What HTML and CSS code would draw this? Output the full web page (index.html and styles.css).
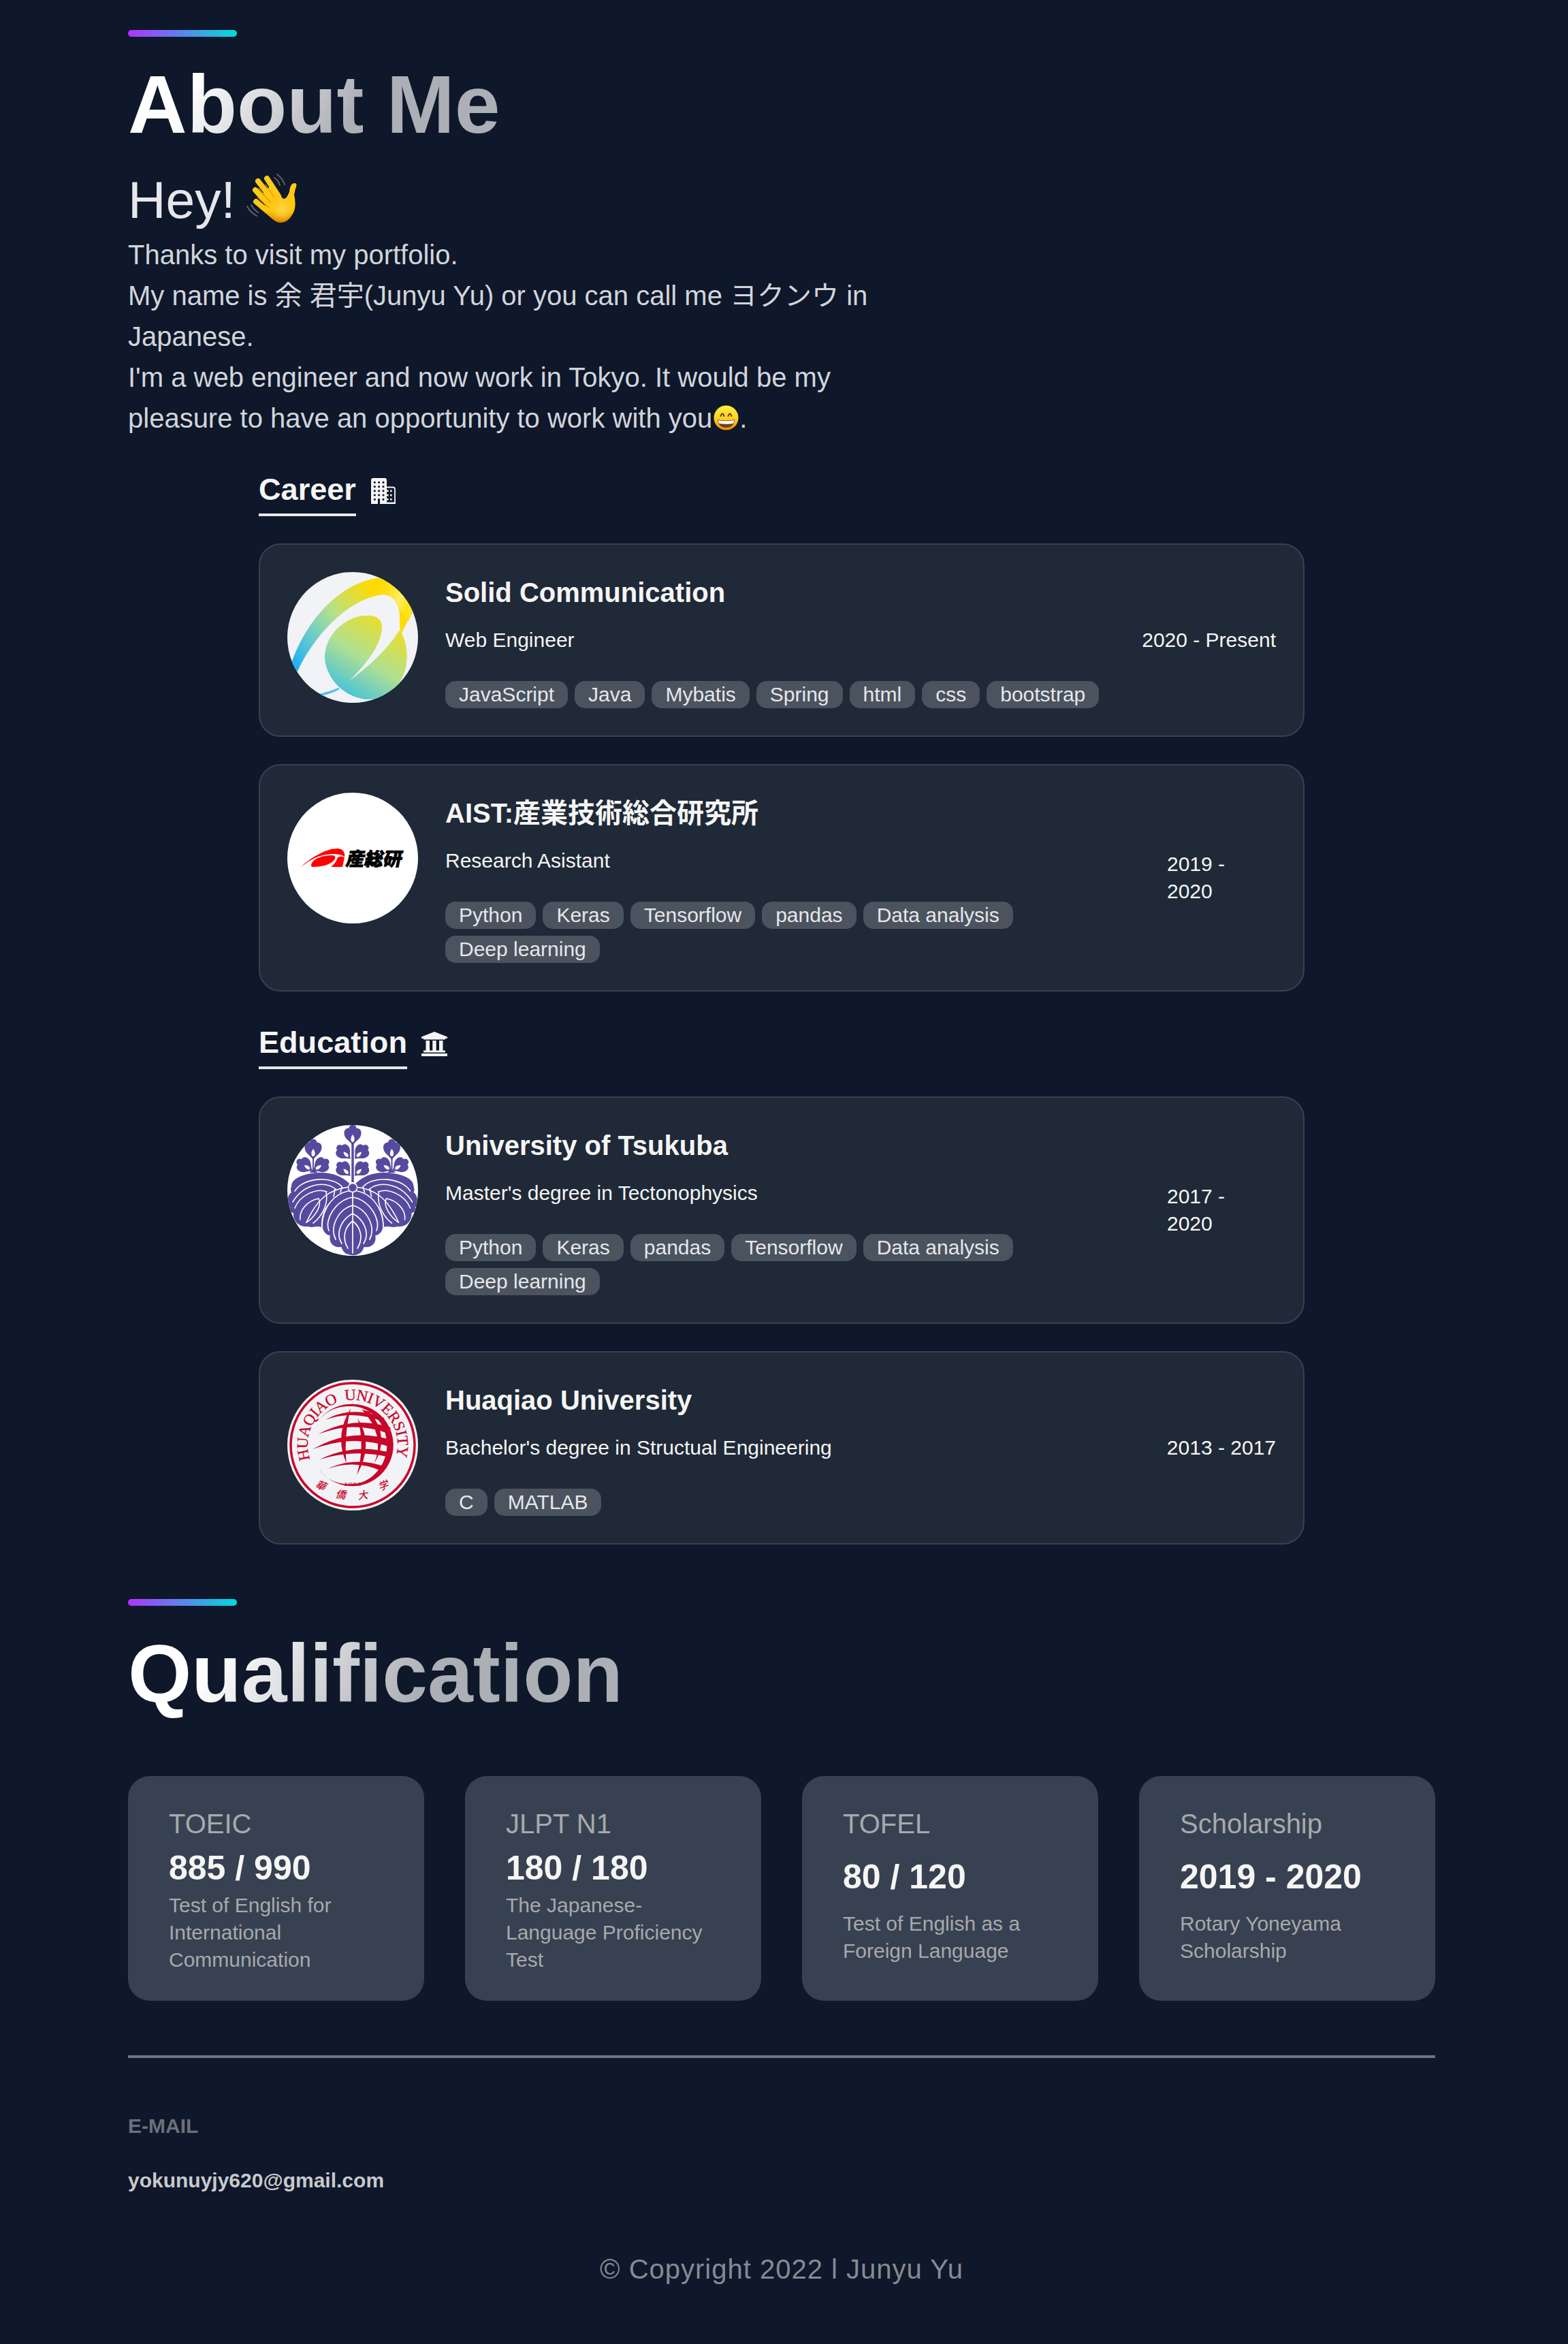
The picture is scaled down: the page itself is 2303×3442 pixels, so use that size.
FILE: index.html
```html
<!DOCTYPE html>
<html lang="en">
<head>
<meta charset="utf-8">
<title>Junyu Yu</title>
<link rel="stylesheet" href="styles.css">
</head>
<body>
<main class="page">
  <section class="about">
    <div class="accent"></div>
    <h1 class="title">About Me</h1>
    <div class="intro">
      <p class="hey">Hey! <svg class="wave" viewBox="0 0 74 73" role="img" aria-label="Waving hand">
        <defs>
          <linearGradient id="skin" x1="0" y1="0" x2="0" y2="73" gradientUnits="userSpaceOnUse"><stop offset="0" stop-color="#ffcb1f"/><stop offset=".75" stop-color="#ffc60e"/><stop offset="1" stop-color="#dd8200"/></linearGradient>
          <radialGradient id="palm" cx=".5" cy=".55" r=".5"><stop offset="0" stop-color="#ffd445"/><stop offset="1" stop-color="#ffd445" stop-opacity="0"/></radialGradient>
        </defs>
        <path d="M36 18 54 38Q58 38 60 34L63 28Q64 14 72 15 75 17 72 23L70 32Q74 50 68 60 61 73 50 73 43 73 37 66L18 44 33 50 24 30Z" fill="url(#skin)"/>
        <g fill="none" stroke="url(#skin)" stroke-width="8" stroke-linecap="round">
          <path d="M30 8 47 34"/><path d="M17 12 42 44"/><path d="M13 25 40 55"/><path d="M14 42 40 64"/>
        </g>
        <g fill="none" stroke="#e39a00" stroke-width="1.3" stroke-linecap="round">
          <path d="M28 17 41 36"/><path d="M18 23 35 43"/><path d="M17 36 33 51"/>
        </g>
        <ellipse cx="52" cy="52" rx="16" ry="18" fill="url(#palm)"/>
        <g fill="none" stroke="#626264" stroke-width="2" stroke-linecap="round"><path d="M45 2Q53 8 56 17"/><path d="M41 7Q47 11 49 18"/><path d="M1 49Q6 58 15 63"/><path d="M7 47Q11 54 17 58"/></g>
      </svg></p>
      <p class="text">Thanks to visit my portfolio.<br>My name is 余 君宇(Junyu Yu) or you can call me ヨクンウ in Japanese.<br>I'm a web engineer and now work in Tokyo. It would be my pleasure to have an opportunity to work with you<svg class="smile" viewBox="0 0 37 37" role="img" aria-label="Grinning face">
        <defs><linearGradient id="face" x2="0" y2="1"><stop offset="0" stop-color="#fff23c"/><stop offset=".55" stop-color="#ffcf22"/><stop offset="1" stop-color="#f08a10"/></linearGradient></defs>
        <circle cx="18.500" cy="18.500" r="18" fill="url(#face)"/>
        <path d="M10.500 16q2.500-7 5 0M21.500 16q2.500-7 5 0" fill="none" stroke="#6b3b06" stroke-width="2" stroke-linecap="round"/>
        <path d="M6 21q12.500 3 25 0Q30 33 18.500 33 7 33 6 21Z" fill="#74400c"/><path d="M7 22q11.500 2.500 23 0 0 5-2 5-9.500 1.500-19 0-2 0-2-5Z" fill="#fff"/>
      </svg>.</p>
    </div>

    <div class="history">
      <div class="heading"><h2 class="heading-text">Career</h2><svg class="icon-building" viewBox="0 0 36 38" aria-hidden="true">
        <path fill="#f5f5f4" d="M3 0H20Q23 0 23 3V38H13V31Q13 30 12 30H11Q10 30 10 31V38H0V3Q0 0 3 0Z"/>
        <path fill="none" stroke="#f5f5f4" stroke-width="1.8" d="M23 13.500H32Q35 13.500 35 16.500V37"/>
        <path fill="#f5f5f4" d="M22 35.500H36V38H22Z"/>
        <path fill="none" stroke="#0f172a" stroke-width="3.200" stroke-linecap="round" d="M5.300 6.300h.01M11.600 6.300h.01M18 6.300h.01M5.300 12.600h.01M11.600 12.600h.01M18 12.600h.01M5.300 18.800h.01M11.600 18.800h.01M18 18.800h.01M5.300 25h.01M11.600 25h.01M18 25h.01M5.300 31.300h.01M18 31.300h.01"/>
        <path fill="#f5f5f4" d="M23 17.500h2.600v2.700H23zM28 17.500h2.600v2.700H28zM23 23.700h2.600v2.700H23zM28 23.700h2.600v2.700H28zM23 29.900h2.600v2.700H23zM28 29.900h2.600v2.700H28z"/>
      </svg></div>

      <article class="card">
        <svg class="avatar" viewBox="0 0 192 192" role="img" aria-label="Solid Communication logo">
          <defs>
            <linearGradient id="ring" gradientUnits="userSpaceOnUse" x1="8" y1="135" x2="135" y2="25"><stop offset="0" stop-color="#1eaff2"/><stop offset=".25" stop-color="#62c9cf"/><stop offset=".55" stop-color="#b2e08e"/><stop offset=".95" stop-color="#fddc06"/></linearGradient>
            <linearGradient id="glow" gradientUnits="userSpaceOnUse" x1="135" y1="20" x2="180" y2="40"><stop offset="0" stop-color="#fddc06" stop-opacity="0"/><stop offset=".7" stop-color="#fff066"/><stop offset="1" stop-color="#ffe21c"/></linearGradient>
            <linearGradient id="ball" gradientUnits="userSpaceOnUse" x1="75" y1="180" x2="145" y2="70"><stop offset="0" stop-color="#3dbfe2"/><stop offset=".5" stop-color="#b0e091"/><stop offset="1" stop-color="#ecde25"/></linearGradient>
          </defs>
          <rect width="192" height="192" fill="#f1f3f6"/>
          <path d="M5 137C25 75 75 15 137 8L170 2 192 40 167 92C165 84 165 72 165 62 163 38 149 31 134 34 84 44 37 97 14 148Z" fill="url(#ring)"/>
          <path d="M132 8 170 2 192 40 178 72 165 55Q160 32 137 33Z" fill="url(#glow)"/>
          <path d="M165 85C186 115 179 187 116 187 78 183 55 150 55 124 57 86 91 64 116 64 132 63 140 70 139 83 137 110 112 139 92 159 127 133 150 109 165 85Z" fill="url(#ball)"/>
          <path d="M46 179Q61 176 75 170L77 172Q64 179 50 182Z" fill="#55bdf2"/>
        </svg>
        <div class="body"><h3 class="name">Solid Communication</h3><p class="role">Web Engineer</p>
          <div class="tags"><span class="tag">JavaScript</span><span class="tag">Java</span><span class="tag">Mybatis</span><span class="tag">Spring</span><span class="tag">html</span><span class="tag">css</span><span class="tag">bootstrap</span></div></div>
        <p class="date">2020 - Present</p>
      </article>

      <article class="card">
        <svg class="avatar" viewBox="0 0 192 192" role="img" aria-label="AIST logo">
          <rect width="192" height="192" fill="#fff"/>
          <path d="M19 110C36 94 58 82 73 82 82 82 85 88 84 94 80 91 74 90 66 90 45 91 33 99 19 110Z" fill="#f00"/>
          <path d="M35 107C35 99 48 92 66 92 70 92 71 94 70 97 66 105 52 109 38 109Q35 109 35 107Z" fill="#f00"/>
          <path d="M84 95 81 109H64Q71 104 74 95 79 92 84 95Z" fill="#f00"/>
          <text class="aist" transform="translate(85 107) skewX(-12)" textLength="82" lengthAdjust="spacingAndGlyphs">産総研</text>
        </svg>
        <div class="body"><h3 class="name">AIST:産業技術総合研究所</h3><p class="role">Research Asistant</p>
          <div class="tags"><span class="tag">Python</span><span class="tag">Keras</span><span class="tag">Tensorflow</span><span class="tag">pandas</span><span class="tag">Data analysis</span><span class="tag">Deep learning</span></div></div>
        <p class="date">2019 -<br>2020</p>
      </article>

      <div class="heading"><h2 class="heading-text">Education</h2><svg class="icon-bank" viewBox="0 0 38 36" aria-hidden="true"><path fill="#f5f5f4" d="M19 0 38 7.500V10H35V11.500H3V10H0V7.500ZM6.500 13H12V27.500H6.500ZM16.300 13H21.700V27.500H16.300ZM26 13H31.500V27.500H26ZM3 27.500H35V30.500H3ZM0 32H38V36H0Z"/></svg></div>

      <article class="card">
        <svg class="avatar" viewBox="0 0 192 192" role="img" aria-label="University of Tsukuba emblem">
          <defs>
            <g id="floret"><g fill="#564a9f"><circle cx="0" cy="-5" r="5.500"/><circle cx="-6" cy="1" r="6.500"/><circle cx="6" cy="1" r="6.500"/><path d="M-12.500 2C-12 12-4 12 0 21 4 12 12 12 12.500 2Z"/></g><path fill="#fff" d="M0 4C4 9 3 15 0 15-3 15-4 9 0 4Z"/></g>
            <g id="half">
              <path fill="#564a9f" d="M92 87C78 72 60 70 50 70 28 70 6 77 6 90Q4 96 6 99C-1 103-1 118 4 121 2 126 6 129 9 129 8 141 17 151 31 149 37 152 42 147 50 150 49 120 65 106 91 96Z"/>
              <g fill="none" stroke="#fff" stroke-width="1.600" stroke-linecap="round">
                <path d="M91 91C62 94 44 108 28 143"/><path d="M81 92C70 75 25 75 11 97"/><path d="M71 94C56 82 25 85 8 113"/><path d="M58 98C43 92 18 103 11 122"/><path d="M46 108C30 111 17 125 19 139"/><path d="M46 108C52 120 37 138 28 143"/><path d="M57 99C61 118 48 137 38 144"/><path d="M70 94 68 105M80 92 78 99"/>
              </g>
              <path d="M38 42V66L35 69H42L39 66" fill="#564a9f" stroke="#564a9f" stroke-width="2"/>
              <use href="#floret" transform="translate(38 31)"/><use href="#floret" transform="translate(22 57) rotate(-55) scale(.9)"/><use href="#floret" transform="translate(53 57) rotate(55) scale(.9)"/>
              <use href="#floret" transform="translate(80 37) rotate(-45) scale(.88)"/><use href="#floret" transform="translate(80 62) rotate(-45) scale(.88)"/>
            </g>
          </defs>
          <rect width="192" height="192" fill="#fff"/>
          <use href="#half"/><use href="#half" transform="translate(191.500 0) scale(-1 1)"/>
          <path d="M96 25V84" stroke="#fff" stroke-width="6"/><path d="M96 25V84" stroke="#564a9f" stroke-width="3.500"/><use href="#floret" transform="translate(96 10)"/>
          <path fill="#564a9f" stroke="#fff" stroke-width="1.500" d="M96 96C70 98 51 120 51 151Q53 161 62 163C60 174 68 181 79 180 81 188 88 192 96 192 104 192 111 188 113 180 124 181 132 174 130 163Q139 161 141 151C141 120 122 98 96 96Z"/>
          <g fill="none" stroke="#fff" stroke-width="1.700" stroke-linecap="round"><path d="M96 97V188"/><path d="M61 155C54 138 72 110 96 106 120 110 138 138 131 155"/><path d="M71 168C62 150 74 124 96 118 118 124 130 150 121 168"/><path d="M80 174C70 158 80 138 96 130 112 138 122 158 112 174"/><path d="M89 181C80 166 84 150 96 141 108 150 112 166 103 181"/></g>
          <circle cx="96" cy="92" r="6.500" fill="#564a9f" stroke="#fff" stroke-width="1.500"/>
        </svg>
        <div class="body"><h3 class="name">University of Tsukuba</h3><p class="role">Master's degree in Tectonophysics</p>
          <div class="tags"><span class="tag">Python</span><span class="tag">Keras</span><span class="tag">pandas</span><span class="tag">Tensorflow</span><span class="tag">Data analysis</span><span class="tag">Deep learning</span></div></div>
        <p class="date">2017 -<br>2020</p>
      </article>

      <article class="card">
        <svg class="avatar" viewBox="0 0 192 192" role="img" aria-label="Huaqiao University seal">
          <rect width="192" height="192" fill="#f1f3f6"/>
          <circle cx="96" cy="96" r="91" fill="none" stroke="#c8062a" stroke-width="3.500"/>
          <path id="seal" d="M33.500 117A66 66 0 1 1 158.500 117" fill="none"/>
          <text class="seal-latin"><textPath href="#seal" textLength="246">HUAQIAO&#160; UNIVERSITY</textPath></text>
          <g fill="#c8062a" transform="scale(.33333) translate(-66 -78)">
            <path d="M212 248C250 205 300 185 350 185A181 181 0 1 1 207 474C235 515 285 540 345 538 430 540 505 460 505 365 505 270 430 195 350 195 290 192 250 210 212 248Z"/>
            <path d="M235 254Q350 190 490 245L500 268Q360 208 235 254Z"/><path d="M203 318Q350 235 520 288V318Q360 255 203 318Z"/><path d="M178 384Q350 285 528 345V378Q360 315 178 384Z"/><path d="M208 430Q360 355 524 400V422Q360 380 208 430Z"/><path d="M245 470Q370 412 500 463L485 482Q370 428 245 470Z"/>
            <path d="M345 205Q272 325 326 444 315 325 345 205Z"/><path d="M376 249Q410 370 372 498 450 360 376 249Z"/><path d="M394 209Q500 320 449 447 520 330 430 220Z"/>
          </g>
          <text class="seal-year" x="96" y="155.500" text-anchor="middle" textLength="26" lengthAdjust="spacingAndGlyphs">1960</text>
          <text class="seal-han" transform="translate(50 155) rotate(22)"><tspan x="-8" y="6">華</tspan></text>
          <text class="seal-han" transform="translate(79 168) rotate(8)"><tspan x="-8" y="6">僑</tspan></text>
          <text class="seal-han" transform="translate(111 169) rotate(-8)"><tspan x="-8" y="6">大</tspan></text>
          <text class="seal-han" transform="translate(141 155) rotate(-20)"><tspan x="-8" y="6">学</tspan></text>
        </svg>
        <div class="body"><h3 class="name">Huaqiao University</h3><p class="role">Bachelor's degree in Structual Engineering</p>
          <div class="tags"><span class="tag">C</span><span class="tag">MATLAB</span></div></div>
        <p class="date">2013 - 2017</p>
      </article>
    </div>
  </section>

  <section class="qualification">
    <div class="accent"></div>
    <h1 class="title">Qualification</h1>
    <div class="boxes">
      <div class="box"><h4 class="box-name">TOEIC</h4><p class="score">885 / 990</p><p class="desc">Test of English for International Communication</p></div>
      <div class="box"><h4 class="box-name">JLPT N1</h4><p class="score">180 / 180</p><p class="desc">The Japanese-Language Proficiency Test</p></div>
      <div class="box"><h4 class="box-name">TOFEL</h4><p class="score">80 / 120</p><p class="desc">Test of English as a Foreign Language</p></div>
      <div class="box"><h4 class="box-name">Scholarship</h4><p class="score">2019 - 2020</p><p class="desc">Rotary Yoneyama Scholarship</p></div>
    </div>
  </section>

  <footer class="footer">
    <h4 class="mail-label">E-MAIL</h4>
    <p class="mail">yokunuyjy620@gmail.com</p>
    <p class="copyright">© Copyright 2022 l Junyu Yu</p>
  </footer>
</main>
</body>
</html>
```
FILE: styles.css
```css
* { box-sizing: border-box; margin: 0; padding: 0; }

body {
  background: #0f172a;
  color: #f5f5f4;
  font-family: "Liberation Sans", "Noto Sans CJK JP", sans-serif;
}

.page { width: 1920px; min-height: 3442px; margin-left: 188px; padding-top: 44px; }

.accent {
  width: 160px;
  height: 10px;
  border-radius: 5px;
  background: linear-gradient(270deg, #00dbd8 0%, #b133ff 100%);
}

.title {
  width: max-content;
  margin-top: 33px;
  font-size: 120px;
  line-height: 132px;
  background: linear-gradient(121.57deg, #fff 18.77%, rgba(255, 255, 255, .66) 60.15%);
  -webkit-background-clip: text;
  background-clip: text;
  color: transparent;
}

.intro { width: 1152px; margin-top: 24px; }
.hey { height: 101px; font-size: 76.8px; line-height: 101px; color: #e5e7eb; white-space: nowrap; }
.wave { width: 74px; height: 73px; margin-left: -5px; vertical-align: -7px; }
.text { font-size: 40px; line-height: 60px; color: #d1d5db; }
.smile { width: 37px; height: 37px; margin: 0 1px 0 2px; vertical-align: -4px; }

.history { width: 1536px; margin: 45px auto 0; display: flex; flex-direction: column; gap: 40px; }
.heading { display: flex; align-items: flex-start; }
.card + .heading { margin-top: 5px; }
.heading-text {
  height: 69px;
  padding-bottom: 5px;
  border-bottom: 4px solid #e5e7eb;
  font-size: 45.1px;
  line-height: 60px;
}
.icon-building { width: 36px; height: 38px; margin: 13px 0 0 22px; }
.icon-bank { width: 38px; height: 36px; margin: 14px 0 0 21px; }

.card {
  display: flex;
  align-items: center;
  gap: 40px;
  padding: 40px;
  border: 2px solid #374151;
  border-radius: 32px;
  background: #1f2937;
}
.avatar { width: 192px; height: 192px; flex: none; align-self: flex-start; border-radius: 50%; }
.body { flex: 1; min-width: 0; }
.name { margin-bottom: 20px; font-size: 40px; line-height: 60px; }
.role { margin-bottom: 40px; font-size: 30px; line-height: 40px; }
.tags { display: flex; flex-wrap: wrap; gap: 10px; }
.tag { padding: 0 20px; border-radius: 15px; background: #4b535f; color: #e5e7eb; font-size: 30px; line-height: 40px; }
.date { min-width: 160px; font-size: 30px; line-height: 40px; white-space: nowrap; }

.aist { font: 900 27px "Noto Sans CJK JP", sans-serif; fill: #000; stroke: #000; stroke-width: .8; }
.seal-latin { font: 23px "Liberation Serif", serif; fill: #c8062a; stroke: #c8062a; stroke-width: .3; }
.seal-year { font: 8px "Liberation Sans", sans-serif; fill: #c8062a; }
.seal-han { font: italic 500 15px "Noto Sans CJK TC", sans-serif; fill: #c8062a; }

.qualification { margin-top: 80px; }
.boxes { display: grid; grid-template-columns: repeat(4, 1fr); gap: 60px; margin-top: 85px; }
.box {
  display: grid;
  align-content: stretch;
  height: 330px;
  padding: 40px 60px;
  border-radius: 32px;
  background: #384151;
}
.box-name { font-size: 40px; font-weight: 400; line-height: 60px; color: #a7a9ad; }
.score { font-size: 50px; font-weight: 700; line-height: 70px; white-space: nowrap; }
.desc { font-size: 30px; line-height: 40px; color: #a7a9ad; }

.footer { margin-top: 80px; border-top: 4px solid #6b7480; }
.mail-label { margin-top: 80px; font-size: 30px; line-height: 40px; color: #6c707c; }
.mail { margin-top: 40px; font-size: 30px; font-weight: 700; line-height: 40px; color: #c8c9cc; }
.copyright { margin-top: 80px; font-size: 40px; line-height: 60px; letter-spacing: 1px; color: #868a93; text-align: center; }
```
